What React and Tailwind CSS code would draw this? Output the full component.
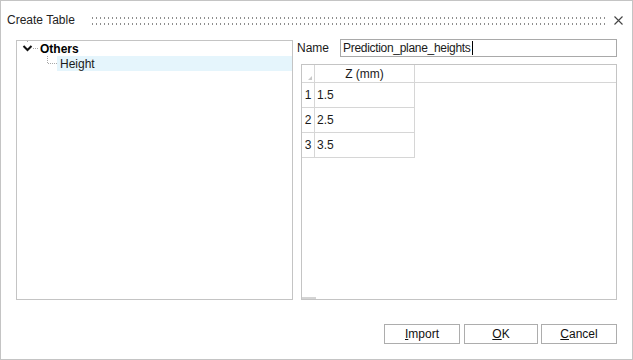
import React from 'react';

const rows = [
  { n: 1, z: '1.5' },
  { n: 2, z: '2.5' },
  { n: 3, z: '3.5' },
];

function DotRow() {
  return (
    <div className="h-[2px] w-full bg-[repeating-linear-gradient(to_right,#8e8e8e_0px,#8e8e8e_1px,transparent_1px,transparent_4px)]" />
  );
}

export default function App() {
  return (
    <div
      className="flex h-[360px] w-[633px] flex-col border border-[#c4c4c4] bg-white text-[12px] text-[#1a1a1a]"
      style={{ fontFamily: '"Liberation Sans", Arial, sans-serif' }}
    >
      {/* title bar */}
      <div className="flex h-[38px] items-center pl-[6px] pr-[9px]">
        <span className="text-[12px] text-[#222]">Create Table</span>
        <div className="ml-[17px] mr-[8px] flex flex-1 flex-col gap-[4px] pt-px">
          <DotRow />
          <DotRow />
        </div>
        <svg width="9" height="9" viewBox="0 0 9 9" className="mt-px">
          <path d="M0.5 0.5 L8.5 8.5 M8.5 0.5 L0.5 8.5" stroke="#444" strokeWidth="1.1" />
        </svg>
      </div>

      {/* body */}
      <div className="flex gap-[4px] pl-[15px] pr-[15px]">
        {/* tree */}
        <div className="mt-px h-[260px] w-[277px] border border-[#c4c4c4] bg-white">
          <div className="flex h-[15px] items-center">
            <svg width="23" height="15" viewBox="0 0 23 15" className="shrink-0">
              <path d="M10.5 0 V2" stroke="#a8a8a8" strokeDasharray="1 1" />
              <path d="M6.5 5 L10.5 9 L14.5 5" fill="none" stroke="#111" strokeWidth="2" />
              <path d="M16 7.5 H22" stroke="#a8a8a8" strokeDasharray="1 1" />
            </svg>
            <span className="font-bold text-black">Others</span>
          </div>
          <div className="flex h-[15px] items-stretch">
            <svg width="40" height="15" viewBox="0 0 40 15" className="shrink-0">
              <path d="M30.5 0 V7" stroke="#a8a8a8" strokeDasharray="1 1" />
              <path d="M31 7.5 H40" stroke="#a8a8a8" strokeDasharray="1 1" />
            </svg>
            <div className="flex flex-1 items-center bg-[#e5f5fc] pl-[3px]">Height</div>
          </div>
        </div>

        {/* right side */}
        <div className="flex flex-1 flex-col">
          <div className="flex h-[18px] items-center">
            <span className="w-[43px]">Name</span>
            <div className="flex h-[18px] flex-1 items-center border border-[#a9a9a9] pl-[2px]">
              <span className="tracking-[-0.3px]">Prediction_plane_heights</span>
              <span className="ml-px h-[14px] w-px bg-black" />
            </div>
          </div>

          <div className="ml-[4px] mt-[7px] flex h-[236px] flex-col border border-[#c4c4c4] bg-white">
            <div className="flex h-[18px] border-b border-[#d6d6d6]">
              <div className="flex w-[13px] items-end justify-end border-r border-[#d6d6d6] pb-[2px] pr-[2px]">
                <svg width="4" height="4" viewBox="0 0 4 4">
                  <path d="M4 0 L4 4 L0 4 Z" fill="#c8c8c8" />
                </svg>
              </div>
              <div className="flex w-[100px] items-center justify-center border-r border-[#d6d6d6]">
                Z (mm)
              </div>
            </div>
            {rows.map((r) => (
              <div key={r.n} className="flex h-[25px] w-[113px] border-b border-[#d6d6d6]">
                <div className="flex w-[13px] items-center justify-center border-r border-[#d6d6d6]">
                  {r.n}
                </div>
                <div className="flex flex-1 items-center border-r border-[#d6d6d6] pl-[2px]">{r.z}</div>
              </div>
            ))}
            <div className="flex-1" />
            <div className="h-[2px] w-[14px] bg-[#d4d4d4]" />
          </div>
        </div>
      </div>

      {/* buttons */}
      <div className="mt-[24px] flex justify-end pr-[15px]">
        <button className="mr-[4px] h-[20px] w-[76px] border border-[#adadad] bg-white text-[12px] text-[#111]">
          <span className="underline">I</span>mport
        </button>
        <button className="mr-[3px] h-[20px] w-[74px] border border-[#adadad] bg-white text-[12px] text-[#111]">
          <span className="underline">O</span>K
        </button>
        <button className="h-[20px] w-[76px] border border-[#adadad] bg-white text-[12px] text-[#111]">
          <span className="underline">C</span>ancel
        </button>
      </div>
    </div>
  );
}
